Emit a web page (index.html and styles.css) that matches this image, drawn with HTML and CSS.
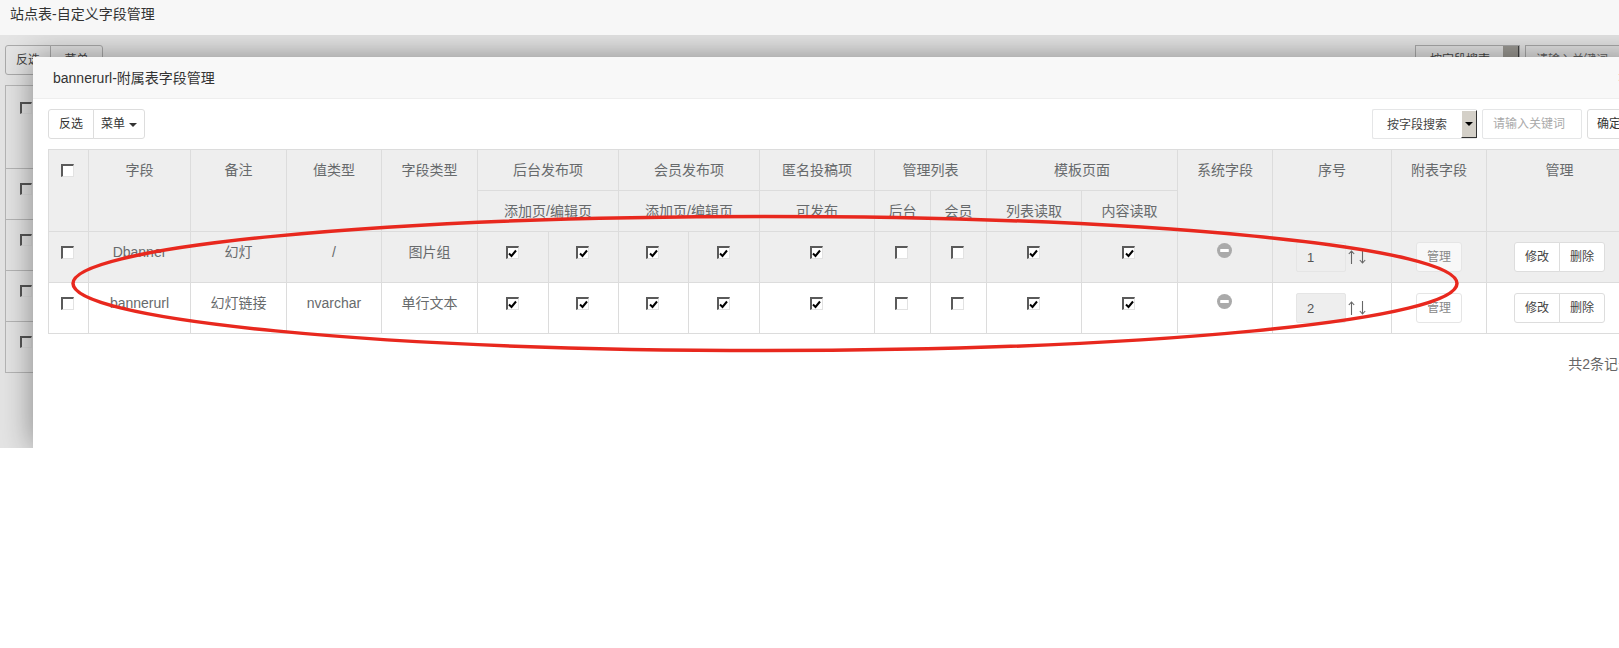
FILE: index.html
```html
<!DOCTYPE html>
<html lang="zh-CN">
<head>
<meta charset="utf-8">
<title>站点表-自定义字段管理</title>
<link rel="stylesheet" href="styles.css">
</head>
<body>
<div class="page">
  <header class="top-title">站点表-自定义字段管理</header>
  <div class="layer">
    <div class="bg-toolbar">
      <div class="bg-group"><span class="bg-btn">反选</span><span class="bg-btn bg-menu">菜单</span></div>
      <div class="bg-search"><span class="bg-select">按字段搜索<i class="bg-arrow"></i></span><span class="bg-input">请输入关键词</span></div>
    </div>
    <table class="bg-table">
      <tr class="bg-head"><td><span class="bg-check"></span></td></tr>
      <tr><td><span class="bg-check"></span></td></tr>
      <tr><td><span class="bg-check"></span></td></tr>
      <tr><td><span class="bg-check"></span></td></tr>
      <tr><td><span class="bg-check"></span></td></tr>
    </table>

    <section class="modal">
      <div class="modal-head"><span>bannerurl-附属表字段管理</span><span class="close">×</span></div>
      <div class="modal-body">
        <div class="toolbar">
          <div class="btn-group"><button class="btn">反选</button><button class="btn btn-menu">菜单<i class="caret"></i></button></div>
          <div class="search">
            <div class="select"><span class="select-text">按字段搜索</span><span class="select-arrow"><i></i></span></div>
            <input class="keyword" type="text" placeholder="请输入关键词">
            <button class="btn btn-ok">确定</button>
          </div>
        </div>
        <table class="grid">
          <colgroup>
            <col class="w40"><col class="w102"><col class="w96"><col class="w95"><col class="w96">
            <col class="w71"><col class="w70"><col class="w70"><col class="w71"><col class="w115">
            <col class="w56"><col class="w56"><col class="w95"><col class="w96"><col class="w95">
            <col class="w119"><col class="w95"><col class="w146">
          </colgroup>
          <thead>
            <tr>
              <th rowspan="2"><input class="chk" type="checkbox"></th>
              <th rowspan="2">字段</th><th rowspan="2">备注</th><th rowspan="2">值类型</th><th rowspan="2">字段类型</th>
              <th colspan="2">后台发布项</th><th colspan="2">会员发布项</th><th>匿名投稿项</th>
              <th colspan="2">管理列表</th><th colspan="2">模板页面</th>
              <th rowspan="2">系统字段</th><th rowspan="2">序号</th><th rowspan="2">附表字段</th><th rowspan="2">管理</th>
            </tr>
            <tr>
              <th colspan="2">添加页/编辑页</th><th colspan="2">添加页/编辑页</th><th>可发布</th>
              <th>后台</th><th>会员</th><th>列表读取</th><th>内容读取</th>
            </tr>
          </thead>
          <tbody>
            <tr class="shade">
              <td><input class="chk" type="checkbox"></td>
              <td>Dbanner</td><td>幻灯</td><td>/</td><td>图片组</td>
              <td><input class="chk" type="checkbox" checked></td><td><input class="chk" type="checkbox" checked></td>
              <td><input class="chk" type="checkbox" checked></td><td><input class="chk" type="checkbox" checked></td>
              <td><input class="chk" type="checkbox" checked></td>
              <td><input class="chk" type="checkbox"></td><td><input class="chk" type="checkbox"></td>
              <td><input class="chk" type="checkbox" checked></td><td><input class="chk" type="checkbox" checked></td>
              <td><svg class="minus" viewBox="0 0 15 15"><circle cx="7.5" cy="7.5" r="7.5"/><rect x="3.2" y="6" width="8.6" height="3" rx=".6"/></svg></td>
              <td><div class="order"><input class="num" type="text" value="1" disabled>
                <svg class="arrows" viewBox="0 0 18 14"><path d="M3.5 14V1M.8 4 3.5 1l2.7 3M14.5 0v13M11.8 10l2.7 3 2.7-3"/></svg></div></td>
              <td><button class="btn btn-faint">管理</button></td>
              <td><div class="btn-group"><button class="btn btn-soft">修改</button><button class="btn btn-soft">删除</button></div></td>
            </tr>
            <tr>
              <td><input class="chk" type="checkbox"></td>
              <td>bannerurl</td><td>幻灯链接</td><td>nvarchar</td><td>单行文本</td>
              <td><input class="chk" type="checkbox" checked></td><td><input class="chk" type="checkbox" checked></td>
              <td><input class="chk" type="checkbox" checked></td><td><input class="chk" type="checkbox" checked></td>
              <td><input class="chk" type="checkbox" checked></td>
              <td><input class="chk" type="checkbox"></td><td><input class="chk" type="checkbox"></td>
              <td><input class="chk" type="checkbox" checked></td><td><input class="chk" type="checkbox" checked></td>
              <td><svg class="minus" viewBox="0 0 15 15"><circle cx="7.5" cy="7.5" r="7.5"/><rect x="3.2" y="6" width="8.6" height="3" rx=".6"/></svg></td>
              <td><div class="order"><input class="num" type="text" value="2" disabled>
                <svg class="arrows" viewBox="0 0 18 14"><path d="M3.5 14V1M.8 4 3.5 1l2.7 3M14.5 0v13M11.8 10l2.7 3 2.7-3"/></svg></div></td>
              <td><button class="btn btn-faint">管理</button></td>
              <td><div class="btn-group"><button class="btn btn-soft">修改</button><button class="btn btn-soft">删除</button></div></td>
            </tr>
          </tbody>
        </table>
        <p class="total">共2条记录</p>
      </div>
    </section>
  </div>
  <svg class="ring" viewBox="0 0 1619 648" aria-hidden="true"><ellipse cx="765" cy="283.5" rx="692" ry="67"/></svg>
</div>
</body>
</html>
```
FILE: styles.css
```css
* { box-sizing: border-box; }
html, body { margin: 0; background: #fff; }
body {
  font-family: "Liberation Sans", "Noto Sans CJK SC", sans-serif;
  font-size: 14px;
  line-height: 20px;
  color: #676a6c;
}
.page { position: relative; width: 1619px; height: 648px; overflow: hidden; }

.top-title {
  position: relative;
  z-index: 2;
  height: 35px;
  padding: 4px 10px;
  background: #f7f7f7;
  color: #333;
}

.layer {
  position: relative;
  height: 413px;
  padding: 10px 0 0 5px;
  overflow: hidden;
  background: #e4e4e4;
}

.bg-toolbar { display: flex; justify-content: space-between; height: 30px; width: 1620px; }
.bg-group { display: flex; font-size: 12px; }
.bg-btn {
  width: 46px; height: 30px; line-height: 28px; text-align: center;
  border: 1px solid #aaa; border-radius: 3px 0 0 3px; color: #444;
}
.bg-menu { width: 53px; margin-left: -1px; border-radius: 0 3px 3px 0; }
.bg-search { display: flex; gap: 5px; font-size: 12px; }
.bg-select {
  position: relative; width: 105px; height: 30px; padding: 4px 14px;
  border: 1px solid #aaa; color: #444;
}
.bg-arrow { position: absolute; right: 0; top: 0; width: 16px; height: 28px; background: #9c9a94; border-right: 1px solid #444; }
.bg-input { width: 100px; height: 30px; padding: 4px 10px; border: 1px solid #aaa; color: #666; }

.bg-table { border-collapse: collapse; margin-top: 10px; width: 1600px; }
.bg-table td { height: 51px; padding: 14px 0 0 14px; vertical-align: top; border: 1px solid #b5b5b5; }
.bg-table .bg-head td { height: 83px; padding-top: 16px; }
.bg-check {
  display: block; width: 12px; height: 12px;
  border-top: 2px solid #555; border-left: 2px solid #555;
  border-right: 1px solid #ddd; border-bottom: 1px solid #ddd;
}

.modal {
  position: absolute;
  left: 33px;
  top: 22px;
  bottom: 0;
  width: 1614px;
  background: #fff;
  box-shadow: 0 0 30px rgba(0, 0, 0, .42);
}
.modal-head {
  display: flex; justify-content: space-between; align-items: center;
  height: 42px; padding: 0 20px;
  background: #f8f8f8; border-bottom: 1px solid #eee; color: #333;
}
.close { font-size: 16px; color: #555; }
.modal-body { padding: 10px 15px 0; }

.toolbar { display: flex; justify-content: space-between; height: 30px; margin-bottom: 10px; }
.btn-group { display: inline-flex; vertical-align: top; }
.btn {
  height: 30px; padding: 0 10px;
  font: 12px/28px "Liberation Sans", "Noto Sans CJK SC", sans-serif;
  color: #333; background: #fff;
  border: 1px solid #ddd; border-radius: 3px;
}
.btn-soft { color: #444; }
.btn-menu { padding: 0 7px; }
.btn-group .btn:first-child { border-radius: 3px 0 0 3px; }
.btn-group .btn:last-child { margin-left: -1px; border-radius: 0 3px 3px 0; }
.caret {
  display: inline-block; margin-left: 4px; vertical-align: middle;
  border-top: 4px solid #333; border-left: 4px solid transparent; border-right: 4px solid transparent;
}

.search { display: flex; gap: 5px; }
.select {
  display: flex; justify-content: space-between; width: 105px; height: 30px;
  font-size: 12px; line-height: 30px; color: #444;
  background: #fff; border: 1px solid #e5e6e7; border-right: 0; border-radius: 2px;
}
.select-text { padding-left: 14px; }
.select-arrow {
  display: flex; align-items: center; justify-content: center;
  width: 16px; height: 28px;
  background: #d4d0c8;
  border-top: 1px solid #fff; border-left: 1px solid #fff;
  border-right: 1px solid #333; border-bottom: 1px solid #333;
}
.select-arrow i { border-top: 4px solid #000; border-left: 4px solid transparent; border-right: 4px solid transparent; }
.keyword {
  width: 100px; height: 30px; padding: 0 10px;
  font: 12px "Liberation Sans", "Noto Sans CJK SC", sans-serif;
  border: 1px solid #e5e6e7; border-radius: 2px; outline: 0;
}
.keyword::placeholder { color: #aaa; opacity: 1; }
.btn-ok { width: 45px; padding: 0 9px; text-align: left; }

.grid { width: 1584px; table-layout: fixed; border-collapse: collapse; }
.w40 { width: 40px; } .w56 { width: 56px; } .w70 { width: 70px; } .w71 { width: 71px; }
.w95 { width: 95px; } .w96 { width: 96px; } .w102 { width: 102px; } .w115 { width: 115px; }
.w119 { width: 119px; } .w146 { width: 146px; }
.grid th, .grid td {
  padding: 10px 0;
  border: 1px solid #dcdcdc;
  text-align: center;
  vertical-align: top;
  font-weight: 400;
  white-space: nowrap;
}
.grid th { background: #eee; }
.shade td { background: #eee; }

.chk {
  display: inline-block; appearance: none; -webkit-appearance: none;
  width: 13px; height: 13px; margin: 4px 2px 0 0; padding: 0; vertical-align: top;
  background: #fff center / 9px 9px no-repeat;
  border-style: solid; border-width: 2px 1px 1px 2px;
  border-color: #5a5a5a #e2e2e2 #e2e2e2 #5a5a5a;
}
.chk:checked {
  background-image: url("data:image/svg+xml,%3Csvg xmlns='http://www.w3.org/2000/svg' viewBox='0 0 9 9'%3E%3Cpath d='M1 4.5 3.5 7 8 1.5' fill='none' stroke='%23000' stroke-width='2'/%3E%3C/svg%3E");
}

.minus { display: inline-block; width: 15px; height: 15px; margin: 1px 2px 0 0; vertical-align: top; }
.minus circle { fill: #aaa; }
.minus rect { fill: #fff; }

.order { display: flex; justify-content: center; align-items: center; gap: 2px; height: 30px; padding-right: 2px; }
.num {
  width: 50px; height: 30px; padding: 0 10px;
  font: 13px "Liberation Sans", "Noto Sans CJK SC", sans-serif;
  color: #555; background: #eee;
  border: 1px solid #e5e5e5; border-radius: 2px;
}
.arrows { width: 18px; height: 14px; fill: none; stroke: #666; stroke-width: 1.1; }

.btn-faint { width: 46px; padding: 0; color: #888; background: #f8f8f8; border-color: #e5e5e5; }
tbody tr:not(.shade) .btn-faint { background: #fff; }

.total { width: 1584px; margin: 20px 0 0; text-align: right; color: #666; }

.ring { position: absolute; left: 0; top: 0; width: 1619px; height: 648px; fill: none; stroke: #e8281e; stroke-width: 3.5; pointer-events: none; }
```
